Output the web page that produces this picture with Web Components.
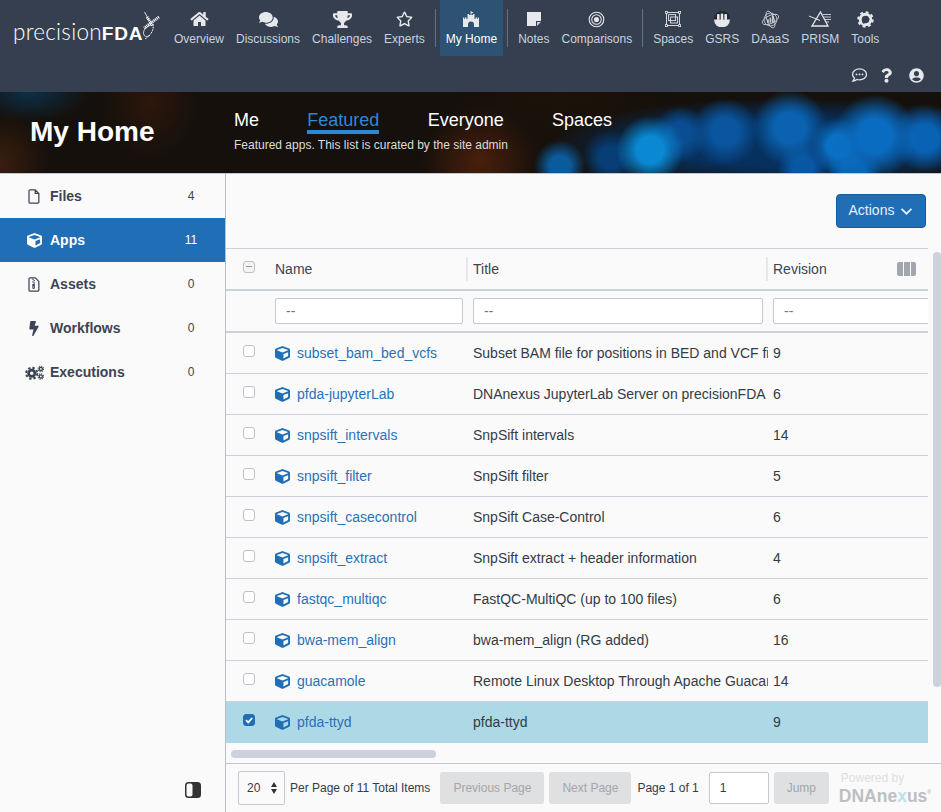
<!DOCTYPE html>
<html lang="en"><head><meta charset="utf-8"><title>My Home</title>
<style>
html,body{margin:0;padding:0;height:100%;overflow:hidden;background:#fafafa}
body{font-family:"Liberation Sans",Arial,sans-serif}
</style></head><body>
<pf-app></pf-app>
<script>
const ICONS={
home:['0 0 576 512','<path d="M280.37 148.26L96 300.11V464a16 16 0 0 0 16 16l112.06-.29a16 16 0 0 0 15.92-16V368a16 16 0 0 1 16-16h64a16 16 0 0 1 16 16v95.64a16 16 0 0 0 16 16.05L464 480a16 16 0 0 0 16-16V300L295.67 148.26a12.19 12.19 0 0 0-15.3 0zM571.6 251.47L488 182.56V44.05a12 12 0 0 0-12-12h-56a12 12 0 0 0-12 12v72.61L318.47 43a48 48 0 0 0-61 0L4.34 251.47a12 12 0 0 0-1.6 16.9l25.5 31A12 12 0 0 0 45.15 301l235.22-193.74a12.19 12.19 0 0 1 15.3 0L530.9 301a12 12 0 0 0 16.9-1.6l25.5-31a12 12 0 0 0-1.7-16.93z"/>'],
comments:['0 0 576 512','<path d="M416 192c0-88.4-93.1-160-208-160S0 103.6 0 192c0 34.3 14.1 65.9 38 92-13.4 30.2-35.5 54.2-35.8 54.5-2.2 2.3-2.8 5.7-1.5 8.7S4.8 352 8 352c36.6 0 66.9-12.3 88.7-25 32.2 15.7 70.3 25 111.3 25 114.9 0 208-71.6 208-160zm122 220c23.9-26 38-57.7 38-92 0-66.9-53.5-124.2-129.3-148.1.9 6.6 1.3 13.3 1.3 20.1 0 105.9-107.7 192-240 192-10.8 0-21.3-.8-31.7-1.9C207.8 439.6 281.8 480 368 480c41 0 79.1-9.2 111.3-25 21.8 12.7 52.1 25 88.7 25 3.2 0 6.1-1.9 7.3-4.8 1.3-2.9.7-6.3-1.5-8.7-.3-.3-22.4-24.2-35.8-54.5z"/>'],
trophy:['0 0 576 512','<path d="M552 64H448V24c0-13.3-10.7-24-24-24H152c-13.3 0-24 10.7-24 24v40H24C10.7 64 0 74.7 0 88v56c0 35.7 22.5 72.4 61.9 100.7 31.5 22.7 69.8 37.1 110 41.7C203.3 338.5 240 360 240 360v72h-48c-35.3 0-64 20.7-64 56v12c0 6.6 5.4 12 12 12h296c6.6 0 12-5.4 12-12v-12c0-35.3-28.7-56-64-56h-48v-72s36.7-21.5 68.1-73.6c40.3-4.6 78.6-19 110-41.7 39.3-28.3 61.9-65 61.9-100.7V88c0-13.3-10.7-24-24-24zM99.3 192.8C74.9 175.2 64 155.6 64 144v-16h64.2c1 32.6 5.8 61.2 12.8 86.2-15.1-5.2-29.2-12.4-41.7-21.4zM512 144c0 16.1-17.7 36.1-35.3 48.8-12.5 9-26.7 16.2-41.8 21.4 7-25 11.8-53.6 12.8-86.2H512v16z"/>'],
star:['0 0 576 512','<path d="M528.1 171.5L382 150.2 316.7 17.8c-11.7-23.6-45.6-23.9-57.4 0L194 150.2 47.9 171.5c-26.2 3.8-36.7 36.1-17.7 54.6l105.7 103-25 145.5c-4.5 26.3 23.2 46 46.4 33.7L288 439.6l130.7 68.7c23.2 12.2 50.9-7.4 46.4-33.7l-25-145.5 105.7-103c19-18.5 8.5-50.8-17.7-54.6zM388.6 312.3l23.7 138.4L288 385.4l-124.3 65.3 23.7-138.4-100.6-98 139-20.2 62.2-126 62.2 126 139 20.2-100.6 98z"/>'],
castle:['0 0 16 16','<path d="M7.6 0h.8v.8l2.4.8-2.4.8V4H10V3h1.5v5h1V6.5H14V8h.7V6.5H16V16H11v-2.5a3 3 0 0 0-6 0V16H0V6.5h1.3V8H2V6.5h1.5V8h1V3H6v1h1.6z"/>'],
note:['0 0 14 14','<path d="M0 0h14v9h-5v5H0z"/><path d="M10 10h4l-4 4z" opacity=".85"/>'],
bullseye:['0 0 20 20','<g fill="none" stroke="currentColor"><circle cx="10" cy="10" r="8.6" stroke-width="1.3"/><circle cx="10" cy="10" r="5.6" stroke-width="1.2"/></g><circle cx="10" cy="10" r="3"/>'],
spaces:['0 0 16 16','<g fill="none" stroke="currentColor" stroke-width=".9"><rect x="1.5" y="1.5" width="13" height="13"/><rect x="3.6" y="3.6" width="7" height="6"/><rect x="5.6" y="6" width="7" height="6"/></g><g fill="#353f4f" stroke="currentColor" stroke-width=".8"><rect x=".4" y=".4" width="2" height="2"/><rect x="13.6" y=".4" width="2" height="2"/><rect x=".4" y="13.6" width="2" height="2"/><rect x="13.6" y="13.6" width="2" height="2"/></g>'],
gsrs:['0 0 16 16','<circle cx="8" cy="8" r="8" fill="#23272e"/><path d="M0 8.5h16A8 8 0 0 1 0 8.5z"/><rect x="3" y="3" width="2.6" height="6" rx="1"/><rect x="6.7" y="2.5" width="2.6" height="6.5" rx="1"/><rect x="10.4" y="3" width="2.6" height="6" rx="1"/>'],
daas:['0 0 20 20','<g fill="none" stroke="currentColor" stroke-width=".9" opacity=".85"><circle cx="10" cy="10" r="6.8"/><ellipse cx="10" cy="10" rx="9.3" ry="4.2" transform="rotate(-25 10 10)"/><ellipse cx="10" cy="10" rx="3.8" ry="9.3" transform="rotate(-20 10 10)"/></g><rect x="6.5" y="10" width="1.8" height="3.4" opacity=".8"/><rect x="9" y="8" width="1.8" height="5.4" opacity=".8"/><rect x="11.5" y="6" width="1.8" height="7.4" opacity=".8"/>'],
prism:['0 0 22 16','<g fill="none" stroke="currentColor"><path d="M11.5 1L19 15H3z" stroke-width="1.3"/><path d="M0 5L11 9.5" stroke-width="1"/><path d="M14 3.5h8M15 6h7M16 8.5h6M17 11h3" stroke-width="1" opacity=".8"/></g>'],
tools:['0 0 20 20','<circle cx="10" cy="10" r="6.2" fill="none" stroke="currentColor" stroke-width="3.4"/><circle cx="10" cy="10" r="8.5" fill="none" stroke="currentColor" stroke-width="2.4" stroke-dasharray="3.4 3.27"/><path fill="#353f4f" d="M5.8 13l3.2-3.2a2.8 2.8 0 0 1 3.6-3.3l-1.7 1.7.4 1.5 1.5.4 1.7-1.7a2.8 2.8 0 0 1-3.3 3.6l-3.2 3.2z"/>'],
chat:['0 0 20 20','<path fill="none" stroke="currentColor" stroke-width="1.5" d="M10 2.2c4.6 0 8.2 2.9 8.2 6.5s-3.6 6.5-8.2 6.5c-1.1 0-2.1-.2-3-.5-1.2.9-2.8 1.8-4.7 1.8.9-.9 1.6-2.2 1.8-3.3C2.8 11.6 1.800 10.3 1.800 8.7 1.800 5.100 5.400 2.200 10 2.200z"/><circle cx="6.500" cy="8.700" r="1.100"/><circle cx="10" cy="8.700" r="1.100"/><circle cx="13.500" cy="8.700" r="1.100"/>'],
question:['0 0 384 512','<path d="M202.021 0C122.202 0 70.503 32.703 29.914 91.026c-7.363 10.58-5.093 25.086 5.178 32.874l43.138 32.709c10.373 7.865 25.132 6.026 33.253-4.148 25.049-31.381 43.63-49.449 82.757-49.449 30.764 0 68.816 19.799 68.816 49.631 0 22.552-18.617 34.134-48.993 51.164-35.423 19.86-82.299 44.576-82.299 106.405V320c0 13.255 10.745 24 24 24h72.471c13.255 0 24-10.745 24-24v-5.773c0-42.86 125.268-44.645 125.268-160.627C377.504 66.256 286.902 0 202.021 0zM192 373.459c-38.196 0-69.271 31.075-69.271 69.271 0 38.195 31.075 69.27 69.271 69.27s69.271-31.075 69.271-69.271-31.075-69.27-69.271-69.27z"/>'],
user:['0 0 496 512','<path d="M248 8C111 8 0 119 0 256s111 248 248 248 248-111 248-248S385 8 248 8zm0 96c48.6 0 88 39.4 88 88s-39.4 88-88 88-88-39.4-88-88 39.4-88 88-88zm0 344c-58.7 0-111.3-26.6-146.5-68.2 18.8-35.4 55.6-59.8 98.5-59.8 2.4 0 4.8.4 7.1 1.1 13 4.2 26.6 6.9 40.9 6.9 14.3 0 28-2.7 40.9-6.9 2.3-.7 4.7-1.1 7.1-1.1 42.9 0 79.7 24.4 98.5 59.8C359.3 421.4 306.7 448 248 448z"/>'],
cube:['0 0 512 512','<path d="M239.1 6.3l-208 78c-18.7 7-31.1 25-31.1 45v225.1c0 18.2 10.3 34.8 26.5 42.9l208 104c13.5 6.8 29.4 6.8 42.9 0l208-104c16.3-8.1 26.5-24.8 26.5-42.9V129.3c0-20-12.4-37.9-31.1-44.9l-208-78C262 2.2 250 2.2 239.1 6.3zM256 68.4l192 72v1.1l-192 78-192-78v-1.1l192-72zm32 356V275.5l160-65v133.9l-160 80z"/>'],
file:['0 0 14 18','<path fill="none" stroke="currentColor" stroke-width="1.5" d="M2.5 1h6L12.8 5.3V15.5a1.5 1.5 0 0 1-1.5 1.500H2.500A1.500 1.500 0 0 1 1 15.500V2.500A1.500 1.500 0 0 1 2.500 1zM8.500 1v4.300h4.300"/>'],
archive:['0 0 14 18','<path fill="none" stroke="currentColor" stroke-width="1.5" d="M2.5 1h6L12.8 5.3V15.5a1.5 1.5 0 0 1-1.5 1.500H2.500A1.500 1.500 0 0 1 1 15.500V2.500A1.500 1.500 0 0 1 2.500 1z"/><path d="M5 2h1.500v1.500H5zM6.500 3.500H8V5H6.500zM5 5h1.500v1.500H5zM6.500 6.500H8V8H6.500zM5 8.500h3v4.500a1.500 1.500 0 0 1-3 0zM5.900 11.500v1.200h1.200v-1.200z"/>'],
bolt:['0 0 320 512','<path d="M296 160H180.6l42.6-129.8C227.2 15 215.7 0 200 0H56C44 0 33.8 8.9 32.2 20.8l-32 240C-1.7 275.2 9.5 288 24 288h118.7L96.6 482.5c-3.6 15.2 8 29.5 23.3 29.5 8.4 0 16.4-4.4 20.8-12l176-304c9.3-15.9-2.2-36-20.7-36z"/>'],
cogs:['0 0 24 18','<circle cx="8.5" cy="10" r="4" fill="none" stroke="currentColor" stroke-width="3.4"/><circle cx="8.5" cy="10" r="7" fill="none" stroke="currentColor" stroke-width="2.6" stroke-dasharray="3 2.5"/><circle cx="20" cy="4.5" r="2" fill="none" stroke="currentColor" stroke-width="1.7"/><circle cx="20" cy="4.5" r="3.5" fill="none" stroke="currentColor" stroke-width="1.3" stroke-dasharray="1.5 1.25"/><circle cx="20" cy="14" r="2" fill="none" stroke="currentColor" stroke-width="1.7"/><circle cx="20" cy="14" r="3.5" fill="none" stroke="currentColor" stroke-width="1.3" stroke-dasharray="1.5 1.25"/>'],
chevron:['0 0 14 10','<path fill="none" stroke="currentColor" stroke-width="2" d="M1.5 2L7 7.5 12.5 2"/>'],
half:['0 0 16 16','<rect x="0" y="0" width="16" height="16" rx="3.5"/><rect x="1.5" y="1.5" width="6" height="13" rx="2" fill="#fafafa"/>'],
helix:['0 0 20 30','<g fill="none" stroke="#fff"><path d="M4.5 1L9 9" stroke-width=".8"/><path d="M7 6L13 15" stroke-width="3" stroke-dasharray="1.1 .7"/><path d="M19 6L4 17" stroke-width="2.8" stroke-dasharray="1.1 .7"/><path d="M11 14C6 16 2 20 4 24c1 2 4 2 6 0" stroke-width=".8"/><path d="M13 14c1 5-2 10-8 14" stroke-width="1" stroke-dasharray="1.2 .6"/></g>']
};
class Base extends HTMLElement{
  render(html){(this.shadowRoot||this.attachShadow({mode:'open'})).innerHTML=html}
}
customElements.define('pf-icon',class extends Base{
  connectedCallback(){
    const [vb,inner]=ICONS[this.getAttribute('name')];
    this.render(`<style>:host{display:inline-flex;flex:none;width:16px;height:16px;color:inherit}svg{width:100%;height:100%;display:block;fill:currentColor}</style><svg viewBox="${vb}" aria-hidden="true">${inner}</svg>`);
  }
});
customElements.define('pf-logo',class extends Base{
  connectedCallback(){
    this.render(`<style>:host{display:flex;align-items:flex-start;width:155px;flex:none;height:56px;color:#fff;white-space:nowrap;margin-left:13px}
    .t{font-family:Lato,"Liberation Sans",sans-serif;font-size:22.5px;line-height:28px;margin-top:18px;font-weight:300;letter-spacing:.25px;width:127px;flex:none}
    b{font-family:"Liberation Sans",sans-serif;font-weight:700;font-size:19px;letter-spacing:.8px}
    pf-icon{width:20px;height:30px;margin:11px 0 0 0}</style>
    <span class="t">precision<b>FDA</b></span><pf-icon name="helix"></pf-icon>`);
  }
});
customElements.define('pf-nav-item',class extends Base{
  connectedCallback(){
    const a=this.hasAttribute('active');
    const w=this.getAttribute('w')||'18',h=this.getAttribute('h')||'16';
    this.render(`<style>:host{display:flex;flex-direction:column;align-items:center;height:56px;padding:0 6px;box-sizing:border-box;color:#c9d3df;font-size:12px;white-space:nowrap;${a?'background:#2e5273;color:#fff;':''}}
    .i{height:16px;margin-top:11px;display:flex;align-items:center;justify-content:center;color:#e6e8ec}
    pf-icon{width:${w}px;height:${h}px}
    .l{margin-top:5px;line-height:14px}</style>
    <div class="i"><pf-icon name="${this.getAttribute('icon')}"></pf-icon></div><div class="l">${this.getAttribute('label')}</div>`);
  }
});
customElements.define('pf-header',class extends Base{
  connectedCallback(){
    const n=(i,l,w,h,x='')=>`<pf-nav-item icon="${i}" label="${l}" w="${w}" h="${h}" ${x}></pf-nav-item>`;
    this.render(`<style>:host{display:block;height:92px;background:#353f4f;box-sizing:border-box}
    .top{display:flex;height:56px}
    nav{display:flex}
    .sep{width:1px;height:38px;margin:9px 4px 0;background:#66707f;flex:none}
    .util{display:flex;justify-content:flex-end;align-items:center;height:36px;padding:2px 17px 0 0;box-sizing:border-box;color:#e6e8ec}
    .util pf-icon{height:15px;width:15px}
    .util pf-icon:nth-child(1){width:17px;height:17px;margin-right:13px}
    .util pf-icon:nth-child(2){width:11px;height:15px;margin-right:17px}
    </style>
    <div class="top"><pf-logo></pf-logo><nav>
    ${n('home','Overview',19,16)}${n('comments','Discussions',19,17)}${n('trophy','Challenges',19,17)}${n('star','Experts',17,16)}
    <div class="sep"></div>${n('castle','My Home',16,16,'active')}<div class="sep"></div>
    ${n('note','Notes',14,14)}${n('bullseye','Comparisons',17,17)}<div class="sep"></div>
    ${n('spaces','Spaces',16,16)}${n('gsrs','GSRS',16,16)}${n('daas','DAaaS',19,19)}${n('prism','PRISM',22,16)}${n('tools','Tools',17,17)}
    </nav></div>
    <div class="util"><pf-icon name="chat"></pf-icon><pf-icon name="question"></pf-icon><pf-icon name="user"></pf-icon></div>`);
  }
});
customElements.define('pf-banner',class extends Base{
  connectedCallback(){
    const blobs=[[650,58,34,'#0a88d2'],[875,44,42,'#0a6cc0'],[925,46,34,'#0a62b4'],[790,36,38,'#0a62b0'],[838,54,28,'#0a70c4'],[725,40,34,'#0a559e'],[680,42,28,'#0a4d92'],[560,74,26,'#0a5a9c'],[803,76,26,'#0a56a2'],[853,80,28,'#0a66b4'],[610,66,28,'#073c74']];
    const bg=blobs.map(([x,y,r,c])=>`radial-gradient(circle ${r}px at ${x}px ${y}px,${c} 0%,${c} 40%,transparent 100%)`).join(',');
    const base='radial-gradient(ellipse 240px 46px at 790px 52px,#06305e 0%,#06305e 50%,transparent 100%)';
    const warm='radial-gradient(ellipse 60px 55px at 480px 70px,#4a1f0c 0%,transparent 100%),radial-gradient(ellipse 50px 60px at 150px 10px,#2c170c 0%,transparent 100%),radial-gradient(ellipse 60px 30px at 30px 0,#0c3048 0%,transparent 100%),radial-gradient(ellipse 50px 50px at 0 70px,#3a1e0f 0%,transparent 100%),radial-gradient(ellipse 120px 60px at 560px 0,#1c1208 0%,transparent 100%)';
    this.render(`<style>:host{display:flex;height:81px;box-sizing:content-box;border-bottom:1px solid #c2c7ce;background:${bg},${base},${warm},#15100b;color:#fff;align-items:stretch}
    h1{margin:0;font-size:28px;font-weight:700;width:234px;flex:none;padding-left:30px;box-sizing:border-box;line-height:32px;padding-top:24px}
    .r{padding-top:17px}
    .tabs{display:flex;gap:48.3px;font-size:18px;line-height:22px}
    .tabs span{display:block;height:25px;box-sizing:border-box}
    .on{color:#2f86d6;border-bottom:4px solid #2a87d8}
    p{margin:0;font-size:12px;line-height:14px;color:#dcdcdc;margin-top:4px}</style>
    <h1>My Home</h1><div class="r"><div class="tabs"><span>Me</span><span class="on">Featured</span><span>Everyone</span><span>Spaces</span></div><p>Featured apps. This list is curated by the site admin</p></div>`);
  }
});
customElements.define('pf-side-item',class extends Base{
  connectedCallback(){
    const a=this.hasAttribute('active');
    const w=this.getAttribute('w')||'14',h=this.getAttribute('h')||'16';
    this.render(`<style>:host{display:flex;align-items:center;height:44px;color:#3c4453;${a?'background:#1f6eb6;color:#fff;':''}}
    .i{width:22px;margin-left:23px;margin-right:5px;display:flex;justify-content:center}
    pf-icon{width:${w}px;height:${h}px}
    b{font-size:14px;flex:1}
    span{width:26px;margin-right:21px;text-align:center;font-size:12px}</style>
    <div class="i"><pf-icon name="${this.getAttribute('icon')}"></pf-icon></div><b>${this.getAttribute('label')}</b><span>${this.getAttribute('count')}</span>`);
  }
});
customElements.define('pf-sidebar',class extends Base{
  connectedCallback(){
    this.render(`<style>:host{display:flex;flex-direction:column;width:226px;flex:none;box-sizing:border-box;border-right:1px solid #b9bec6;background:#fafafa}
    .s{flex:1}.b{display:flex;justify-content:flex-end;padding:0 24px 14px 0;color:#333}
    pf-icon{width:16px;height:16px}</style>
    <pf-side-item icon="file" label="Files" count="4" w="12" h="15"></pf-side-item>
    <pf-side-item icon="cube" label="Apps" count="11" w="15" h="15" active></pf-side-item>
    <pf-side-item icon="archive" label="Assets" count="0" w="12" h="15"></pf-side-item>
    <pf-side-item icon="bolt" label="Workflows" count="0" w="10" h="15"></pf-side-item>
    <pf-side-item icon="cogs" label="Executions" count="0" w="19" h="15"></pf-side-item>
    <div class="s"></div><div class="b"><pf-icon name="half"></pf-icon></div>`);
  }
});
customElements.define('pf-check',class extends Base{
  connectedCallback(){
    const s=this.getAttribute('state');
    const inner=s==='on'?'<svg viewBox="0 0 12 12"><path d="M3 6.2l2.2 2.2L9.2 4" fill="none" stroke="#fff" stroke-width="1.8"/></svg>':s==='mixed'?'<i></i>':'';
    this.render(`<style>:host{display:flex;align-items:center;justify-content:center;width:12px;height:12px;box-sizing:border-box;border:1px solid #bcc1c8;border-radius:3px;background:#fff;${s==='on'?'background:#1f6eb6;border-color:#1f6eb6;':''}${s==='mixed'?'background:#f3f3f3;':''}}
    i{display:block;width:6px;height:1px;background:#999}svg{width:12px;height:12px;flex:none}</style>${inner}`);
  }
});
customElements.define('pf-row',class extends Base{
  connectedCallback(){
    const on=this.hasAttribute('selected');
    this.render(`<style>:host{display:grid;grid-template-columns:41px 200px 301px 160px;height:41px;box-sizing:border-box;border-bottom:1px solid #ccd1d8;font-size:14px;color:#333b47;${on?'background:#add8e6;border-bottom-color:#add8e6;':''}}
    .c{display:flex;align-items:center;white-space:nowrap;overflow:hidden;min-width:0}
    .k{padding:0 0 5px 17px;align-items:center}
    .n{padding-left:8px;color:#2a71b8;gap:7px}
    .t{padding-left:6px}
    .r{padding-left:5px}
    pf-icon{width:15px;height:15px;color:#1f6eb6}</style>
    <div class="c k"><pf-check state="${on?'on':'off'}"></pf-check></div>
    <div class="c n"><pf-icon name="cube"></pf-icon>${this.getAttribute('name')}</div>
    <div class="c t">${this.getAttribute('ttl')}</div>
    <div class="c r">${this.getAttribute('rev')}</div>`);
  }
});
customElements.define('pf-table',class extends Base{
  connectedCallback(){
    const rows=[['subset_bam_bed_vcfs','Subset BAM file for positions in BED and VCF files','9'],['pfda-jupyterLab','DNAnexus JupyterLab Server on precisionFDA','6'],['snpsift_intervals','SnpSift intervals','14'],['snpsift_filter','SnpSift filter','5'],['snpsift_casecontrol','SnpSift Case-Control','6'],['snpsift_extract','SnpSift extract + header information','4'],['fastqc_multiqc','FastQC-MultiQC (up to 100 files)','6'],['bwa-mem_align','bwa-mem_align (RG added)','16'],['guacamole','Remote Linux Desktop Through Apache Guacamole','14'],['pfda-ttyd','pfda-ttyd','9']];
    this.render(`<style>:host{display:block;width:702px;overflow:hidden;border-top:1px solid #ccd1d8;box-sizing:border-box;font-size:14px;color:#3c4453}
    .h,.f{display:grid;grid-template-columns:41px 200px 300px 161px;box-sizing:border-box}
    .h{height:42px;border-bottom:2px solid #ccd1d8;align-items:center}
    .f{height:42px;border-bottom:2px solid #ccd1d8;align-items:center;padding-bottom:1px}
    .ck{padding:0 0 5px 17px}
    .nm{padding-left:8px;height:24px;display:flex;align-items:center;border-right:2px solid #e6e8eb;margin-right:-1px}
    .ti{padding-left:6px;height:24px;display:flex;align-items:center;border-right:2px solid #e6e8eb;margin-right:-1px;padding-right:0}
    .re{padding:0 12px 0 6px;display:flex;justify-content:space-between;align-items:center}
    .cols{display:flex;gap:1px}
    .cols i{display:block;width:6px;height:14px;background:#a2a6ad}
    .cols i:first-child{border-radius:2px 0 0 2px}.cols i:last-child{width:5px;border-radius:0 2px 2px 0}
    .in{box-sizing:border-box;height:26px;border:1px solid #c5cad1;border-radius:2px;background:#fff;color:#777;font-size:14px;padding:0 10px;line-height:24px;overflow:hidden}
    .fc{padding-left:6px}.fc:nth-child(2){padding-left:8px}</style>
    <div class="h"><div class="ck"><pf-check state="mixed"></pf-check></div><div class="nm">Name</div><div class="ti">Title</div><div class="re">Revision<span class="cols"><i></i><i></i><i></i></span></div></div>
    <div class="f"><div></div><div class="fc"><div class="in" style="width:188px">--</div></div><div class="fc"><div class="in" style="width:290px">--</div></div><div class="fc"><div class="in" style="width:190px">--</div></div></div>
    ${rows.map((r,i)=>`<pf-row name="${r[0]}" ttl="${r[1]}" rev="${r[2]}" ${i===9?'selected':''}></pf-row>`).join('')}`);
  }
});
customElements.define('pf-pager',class extends Base{
  connectedCallback(){
    this.render(`<style>:host{display:flex;align-items:center;height:49px;box-sizing:border-box;border-top:1px solid #c2c7ce;padding-left:12px;font-size:12px;color:#333b47;white-space:nowrap;background:#fafafa}
    .sel{width:47px;height:34px;box-sizing:border-box;border:1px solid #c5cad1;border-radius:2px;display:flex;align-items:center;justify-content:space-between;padding:0 7px 0 8px;margin-right:5px;background:#fafafa}
    .ar{display:flex;flex-direction:column;gap:2px}
    .ar i{display:block;width:0;height:0;border-left:3.5px solid transparent;border-right:3.5px solid transparent}
    .ar i:first-child{border-bottom:5px solid #333}.ar i:last-child{border-top:5px solid #333}
    .btn{height:32px;display:flex;align-items:center;justify-content:center;background:#dfe0e2;color:#a3a6ab;border-radius:3px;box-sizing:border-box}
    .inp{width:60px;height:32px;box-sizing:border-box;border:1px solid #c5cad1;border-radius:2px;background:#fff;display:flex;align-items:center;padding-left:10px;margin:0 5px 0 10px}
    .pw{margin-left:10px;display:flex;flex-direction:column;line-height:14px;color:#dedede}
    .pw span:first-child{padding-left:2px}
    .dx{font-weight:700;font-size:17.5px;line-height:20px;color:#bcbfc3;margin-top:1px}.dx em{font-style:normal;color:#bfe0ec}.dx sup{font-size:5px;vertical-align:8px;line-height:0}</style>
    <div class="sel">20<span class="ar"><i></i><i></i></span></div><span style="margin-right:10.1px">Per Page of 11 Total Items</span>
    <div class="btn" style="width:104px;margin-right:5px">Previous Page</div><div class="btn" style="width:82px;margin-right:6px">Next Page</div>
    <span>Page 1 of 1</span><div class="inp">1</div><div class="btn" style="width:55px">Jump</div>
    <div class="pw"><span>Powered by</span><span class="dx">DNAne<em>x</em>us<sup>®</sup></span></div>`);
  }
});
customElements.define('pf-main',class extends Base{
  connectedCallback(){
    this.render(`<style>:host{display:flex;flex-direction:column;flex:1;min-width:0;position:relative;background:#fafafa}
    .top{height:74px;display:flex;justify-content:flex-end;align-items:flex-start;padding:20px 15px 0 0;box-sizing:border-box;flex:none}
    button{font:14px "Liberation Sans",sans-serif;height:34px;width:90px;background:#1f6eb6;color:#e8f0f8;border:1px solid #175a98;border-radius:4px;padding:0 0 2px;display:flex;align-items:center;justify-content:center;gap:6px}
    button pf-icon{width:13px;height:9px;margin-top:2px}
    .wrap{flex:1;min-height:0;overflow:hidden}
    .v{position:absolute;right:0;top:78px;width:8px;height:435px;background:#cbd2dc;border-radius:4px}
    .hz{position:absolute;left:5px;top:576px;width:205px;height:8px;background:#cbd2dc;border-radius:4px}</style>
    <div class="top"><button>Actions<pf-icon name="chevron"></pf-icon></button></div>
    <div class="wrap"><pf-table></pf-table></div><pf-pager></pf-pager>
    <div class="v"></div><div class="hz"></div>`);
  }
});
customElements.define('pf-app',class extends Base{
  connectedCallback(){
    this.render(`<style>:host{display:flex;flex-direction:column;height:812px;width:941px;overflow:hidden;font-family:"Liberation Sans",Arial,sans-serif}
    .b{display:flex;flex:1;min-height:0}</style>
    <pf-header></pf-header><pf-banner></pf-banner><div class="b"><pf-sidebar></pf-sidebar><pf-main></pf-main></div>`);
  }
});
</script>
</body></html>
